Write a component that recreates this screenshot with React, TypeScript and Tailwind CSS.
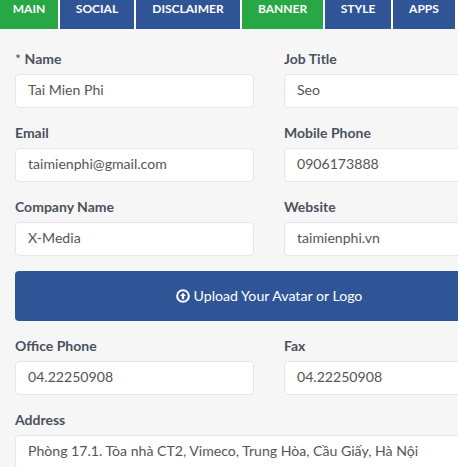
const tabs = [
  { name: "MAIN", width: "w-[58px]", active: true },
  { name: "SOCIAL", width: "w-[74px]", active: false },
  { name: "DISCLAIMER", width: "w-[104px]", active: false },
  { name: "BANNER", width: "w-[81px]", active: true },
  { name: "STYLE", width: "w-[66px]", active: false },
  { name: "APPS", width: "w-[62px]", active: false },
];

function Field({ label, value, star }: { label: string; value: string; star?: boolean }) {
  return (
    <div className="flex flex-col">
      <label className="h-[26px] text-[14px] leading-[21px] font-bold text-[#4a525c]">
        {star ? <span className="font-normal">* </span> : null}
        {label}
      </label>
      <input
        readOnly
        value={value}
        className="h-[34px] w-full rounded-[4px] border border-[#e3e6ea] bg-white px-3 pb-[3px] text-[14.1px] text-[#555] outline-none"
      />
    </div>
  );
}

export default function App() {
  return (
    <div className="h-[467px] w-[458px] overflow-hidden bg-[#f6f6f7] font-['Lato',sans-serif]">
      <div className="flex h-[29px] gap-[2px] bg-white">
        {tabs.map((tab) => (
          <div
            key={tab.name}
            className={`${tab.width} ${tab.active ? "bg-[#28a745]" : "bg-[#2f5597]"} shrink-0 pb-[2px] text-center text-[12px] leading-[18px] font-bold text-white`}
          >
            {tab.name}
          </div>
        ))}
      </div>
      <div className="w-[520px] pt-[19px] pl-[15px]">
        <div className="grid grid-cols-[239px_239px] gap-x-[30px] gap-y-[14px]">
          <Field label="Name" value="Tai Mien Phi" star />
          <Field label="Job Title" value="Seo" />
          <Field label="Email" value="taimienphi@gmail.com" />
          <Field label="Mobile Phone" value="0906173888" />
          <Field label="Company Name" value="X-Media" />
          <Field label="Website" value="taimienphi.vn" />
        </div>
        <button
          type="button"
          className="mt-[15px] flex h-[50px] w-[508px] items-center justify-center gap-1 rounded-[4px] bg-[#2f5597] text-[14.15px] text-white"
        >
          <svg viewBox="0 0 24 24" className="h-[14px] w-[14px]" aria-hidden="true">
            <circle cx="12" cy="12" r="10" fill="none" stroke="currentColor" strokeWidth="3.5" />
            <path d="M12 6.5 17 12h-3v5.5h-4V12H7z" fill="currentColor" />
          </svg>
          Upload Your Avatar or Logo
        </button>
        <div className="mt-[14px] grid grid-cols-[239px_239px] gap-x-[30px] gap-y-[14px]">
          <Field label="Office Phone" value="04.22250908" />
          <Field label="Fax" value="04.22250908" />
        </div>
        <div className="mt-[14px] w-[508px]">
          <Field label="Address" value="Phòng 17.1. Tòa nhà CT2, Vimeco, Trung Hòa, Cầu Giấy, Hà Nội" />
        </div>
      </div>
    </div>
  );
}
